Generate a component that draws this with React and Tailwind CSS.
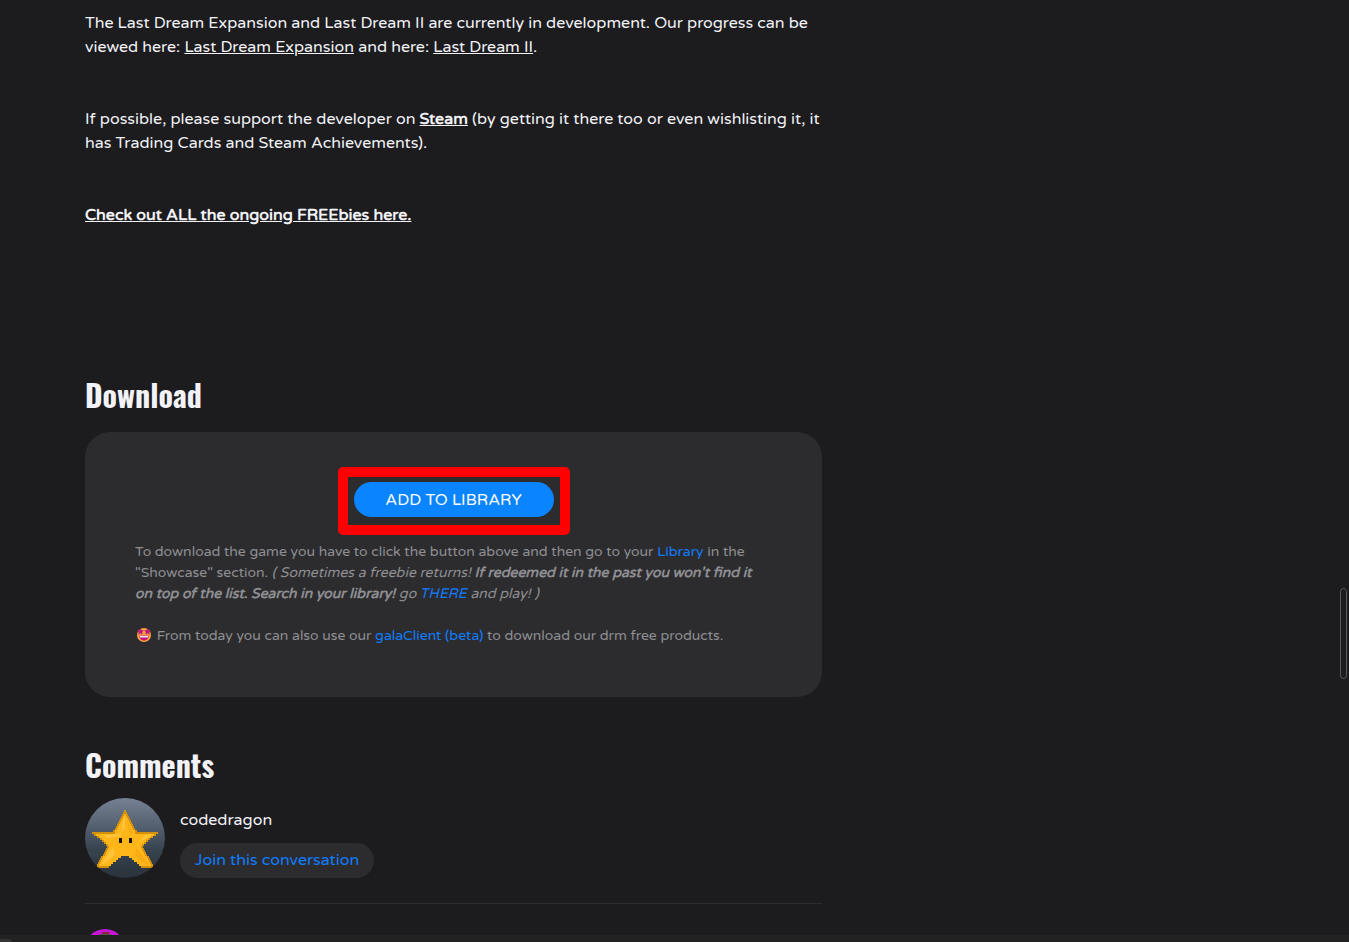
const link = "text-[#107cff]";
const heading =
  "font-['Oswald','Roboto_Condensed','Liberation_Sans_Narrow',sans-serif] text-[30px] leading-[38px] font-bold";

// Rows of the pixel star, top to bottom: [half width, half width of the gap between the feet]
const rows = [
  [1, 0], [2, 0], [3, 0], [4, 0], [5, 0], [6, 0], [7, 0], [8, 0], [9, 0], [10, 0], [12, 0],
  [33, 0], [31, 0], [28, 0], [25, 0], [23, 0], [21, 0], [19, 0], [18, 0], [19, 0], [20, 0],
  [21, 0], [22, 0], [24, 4], [25, 7], [26, 9], [27, 12], [28, 14], [28, 16],
];

function Star() {
  return (
    <svg viewBox="0 0 80 80" className="size-20 shrink-0 rounded-full" role="img" aria-label="codedragon">
      <defs>
        <linearGradient id="sky" x1="0" y1="0" x2="0" y2="1">
          <stop offset="0" stopColor="#768294" />
          <stop offset="0.5" stopColor="#465260" />
          <stop offset="0.65" stopColor="#36434d" />
          <stop offset="1" stopColor="#2b323c" />
        </linearGradient>
      </defs>
      <rect width="80" height="80" fill="url(#sky)" />
      {rows.map(([half, gap], i) => {
        const y = 12 + i * 2;
        const edge = i === 11 || i === 28 ? half : 2;
        return (
          <g key={y} shapeRendering="crispEdges">
            <rect x={40 - half} y={y} width={half - gap} height="2" fill="#d48f0b" />
            <rect x={40 + gap} y={y} width={half - gap} height="2" fill="#d48f0b" />
            {half > edge && (
              <>
                <rect x={40 - half + edge} y={y} width={half - gap - edge} height="2" fill="#ffb619" />
                <rect x={40 + gap} y={y} width={half - gap - edge} height="2" fill="#ffb619" />
              </>
            )}
          </g>
        );
      })}
      <rect x="30" y="34" width="20" height="2" fill="#ffb619" />
      <path fill="#ffd35f" opacity="0.5" d="M38 22l2-4v12l-5 6-17 1 4 3 14-2zM24 54l4-4 2 6-8 8-6 3zM60 37l8-1-8 5-6 3z" />
      <path fill="#f3a012" opacity="0.5" d="M42 22l6 12-3 3zM52 50l5 8 7 9-8-4-6-6z" />
      <path fill="#151006" d="M34 40h3v5h-3zM44 40h3v5h-3z" />
    </svg>
  );
}

function StarEyes() {
  return (
    <svg viewBox="0 0 14 14" className="mr-0.5 ml-0.5 inline-block size-[14px] align-[-2px]" role="img" aria-label="Star-struck">
      <circle cx="7" cy="7" r="7" fill="#f8a63a" />
      <path fill="#c2187d" d="M3.500 0l1.100 2.200 2.300.3-1.700 1.700.4 2.500-2.100-1.200-2.200 1.200.4-2.500L0 2.500l2.400-.3zM10.500 0l1.100 2.200 2.400.3-1.700 1.700.4 2.500-2.200-1.200-2.100 1.200.4-2.500-1.700-1.700 2.300-.3z" />
      <path fill="#c2187d" d="M2.300 7.500h9.400c0 3.200-2 5-4.700 5s-4.700-1.800-4.700-5z" />
      <path fill="#f7dbe8" d="M3 7.800h8v1.700H3z" />
    </svg>
  );
}

function SmallAvatar() {
  return (
    <svg viewBox="0 0 40 40" className="mt-[25px] size-10" role="img" aria-label="Avatar">
      <circle cx="20" cy="20" r="20" fill="#c715d8" />
      <path fill="#8d2340" d="M17 3h7v2h-7z" />
      <path fill="#5c5348" d="M15 5h11v8H15z" />
    </svg>
  );
}

export default function App() {
  return (
    <div className="relative flex h-screen flex-col bg-[#1c1c1e] font-['Varela_Round','Noto_Sans',sans-serif] text-base leading-6 text-[#f2f2f7]">
      <main className="min-h-0 flex-1 overflow-hidden px-[85px] pt-[11px]">
        <div className="max-w-[737px]">
          <article className="flex flex-col gap-12">
            <p>
              The Last Dream Expansion and Last Dream II are currently in development. Our progress can be viewed here:{" "}
              <a href="#expansion" className="underline">Last Dream Expansion</a> and here:{" "}
              <a href="#dream-2" className="underline">Last Dream II</a>.
            </p>
            <p>
              If possible, please support the developer on{" "}
              <a href="#steam" className="font-bold underline">Steam</a> (by getting it there too or even wishlisting it, it has Trading Cards and Steam Achievements).
            </p>
            <p>
              <a href="#freebies" className="font-bold underline">Check out ALL the ongoing FREEbies here.</a>
            </p>
          </article>

          <section className="mt-[149px]">
            <h2 className={heading}>Download</h2>
            <div className="mt-[18px] rounded-[25px] bg-[#2c2c2e] px-[50px] pt-[50px] pb-[51px]">
              <div className="flex justify-center">
                <div className="relative">
                  <button type="button" className="h-[35px] w-[200px] rounded-full bg-[#0a84ff] text-white">ADD TO LIBRARY</button>
                  <span className="pointer-events-none absolute -inset-x-4 -top-[15px] -bottom-[18px] rounded-[5px] border-10 border-[#ff0000]" />
                </div>
              </div>
              <div className="mt-6 text-sm leading-[21px] text-[#8e8e93]">
                <p>
                  To download the game you have to click the button above and then go to your{" "}
                  <a href="#library" className={link}>Library</a> in the "Showcase" section.{" "}
                  <em>
                    ( Sometimes a freebie returns! <strong>If redeemed it in the past you won't find it on top of the list. Search in your library!</strong> go{" "}
                    <a href="#there" className={link}>THERE</a> and play! )
                  </em>
                </p>
                <p className="mt-[21px]">
                  <StarEyes /> From today you can also use our <a href="#client" className={link}>galaClient (beta)</a> to download our drm free products.
                </p>
              </div>
            </div>
          </section>

          <section className="mt-[49px]">
            <h2 className={heading}>Comments</h2>
            <div className="mt-[14px] flex gap-[15px] border-b border-[#2c2c2e] pb-[25px]">
              <Star />
              <div className="flex flex-col items-start justify-between pt-[10px]">
                <span>codedragon</span>
                <button type="button" className="h-[35px] rounded-full bg-[#2c2c2e] px-[15px] pb-0.5 text-[#107cff]">Join this conversation</button>
              </div>
            </div>
            <SmallAvatar />
          </section>
        </div>
      </main>
      <footer className="flex h-[7px] items-end bg-[#212121]">
        <span className="h-[3px] w-3 rounded-tr-sm bg-[#333333]" />
      </footer>
      <span className="absolute top-[588px] right-[2px] h-[91px] w-[7px] rounded-full border border-[#5a5a5c]" />
    </div>
  );
}
